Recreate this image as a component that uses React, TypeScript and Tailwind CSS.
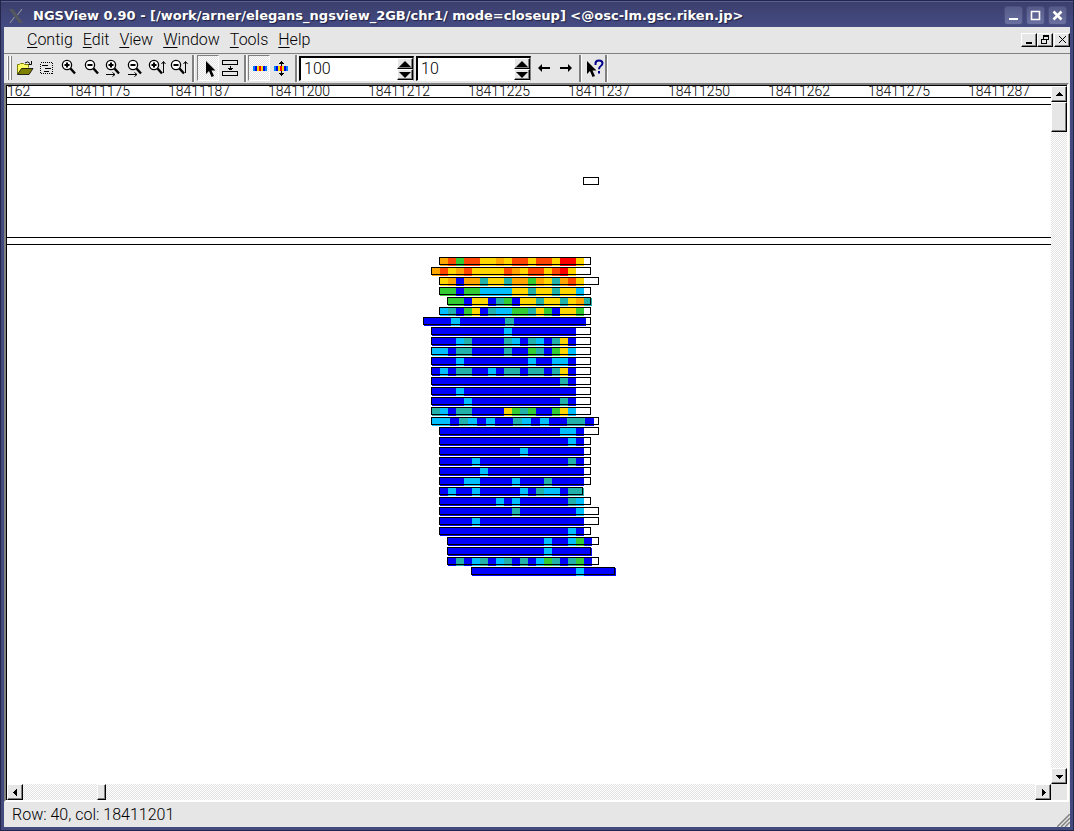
import React, { useState } from "react";

interface ReadType {
  start: number;
  end: number;
  quality: string;
  cell?: number;
}

const qualityColors: Record<string, string> = {
  R: "#ff0000",
  O: "#ff4500",
  A: "#ffa500",
  Y: "#ffd700",
  G: "#32cd32",
  T: "#20b2aa",
  S: "#00bfff",
  B: "#0000ff",
};

// one letter per base, low quality (R) to high quality (B)
const reads: ReadType[] = [
  { start: 432, end: 584, quality: "AOGOOYYAYOOYOOYRRY" },
  { start: 424, end: 584, quality: "AOYAOYYYYOAYOOYORY" },
  { start: 432, end: 592, quality: "YABAATYYTAAGAYTAOY" },
  { start: 432, end: 584, quality: "GGBGGSSSSYYTYYTYYS" },
  { start: 440, end: 584, quality: "GGBYYBTGBYYTYYTYAT" },
  { start: 432, end: 584, quality: "STBGYBTSSGGTYGBYYG" },
  { start: 416, end: 584, quality: "BBBSBBBBBTBBBBBBBB", cell: 9 },
  { start: 424, end: 584, quality: "BBBBBBBBBSBBBBBBBB" },
  { start: 424, end: 584, quality: "BBBSTBBBBTSBTSBTYB" },
  { start: 424, end: 584, quality: "SSBTTBBBBTBBGTBGYS" },
  { start: 424, end: 584, quality: "BBBSBBBBBBBBSBBSSB" },
  { start: 424, end: 584, quality: "BSBTTBBSBTTBTTBTYB" },
  { start: 424, end: 584, quality: "BBBBBBBBBBBBBBBBTB" },
  { start: 424, end: 584, quality: "BBBSBBBBBBBBBBBBBB" },
  { start: 424, end: 584, quality: "BBBBSBBBBBBBBBBBTB" },
  { start: 424, end: 584, quality: "TSBTTBBBBYGTGBBGYS" },
  { start: 424, end: 592, quality: "SSBTSBSBBTSBSBBTTB", cell: 9 },
  { start: 432, end: 592, quality: "BBBBBBBBBBBBBBBSSB" },
  { start: 432, end: 584, quality: "BBBBBBBBBBBBBBBBSB" },
  { start: 432, end: 584, quality: "BBBBBBBBBBSBBBBBBB" },
  { start: 432, end: 584, quality: "BBBBSBBBBBBBBBBBTB" },
  { start: 432, end: 584, quality: "BBBBBSBBBBBBBBBBBB" },
  { start: 432, end: 584, quality: "BBBSSBBBBSBBBTBBBB" },
  { start: 432, end: 576, quality: "BSBBSBBBBBSBTSSBTT" },
  { start: 432, end: 584, quality: "BBBBBBBSBSBBBBBBTS" },
  { start: 432, end: 592, quality: "BBBBBBBBBTBBBBBBBS" },
  { start: 432, end: 592, quality: "BBBBSBBBBBBBBBBBBB" },
  { start: 432, end: 584, quality: "BBBBBBBBBBBBBBBBSB" },
  { start: 440, end: 592, quality: "BBBBBBBBBBBBSBBSGB" },
  { start: 440, end: 584, quality: "BBBBBBBBBBBBSBBBBB" },
  { start: 440, end: 592, quality: "BTBSTBSTBTBSGTBTGB" },
  { start: 464, end: 608, quality: "BBBBBBBBBBBBBSBBBB" },
];

const positions = [
  "18411175",
  "18411187",
  "18411200",
  "18411212",
  "18411225",
  "18411237",
  "18411250",
  "18411262",
  "18411275",
  "18411287",
];

const menus = ["Contig", "Edit", "View", "Window", "Tools", "Help"];

const raised =
  "border border-t-white border-l-white border-r-black border-b-black bg-[#e6e6e6] shadow-[inset_-1px_-1px_0_#808080]";
const dither = "bg-[repeating-conic-gradient(#ffffff_0_25%,#e2e2e2_0_50%)] bg-[length:2px_2px]";

const ReadRow = ({ read, y }: { read: ReadType; y: number }) => {
  const cell = read.cell ?? 8;
  return (
    <g>
      {read.quality.split("").map((q, i) => (
        <rect key={i} x={read.start + 1 + i * cell} y={y + 1} width={cell} height={8} fill={qualityColors[q]} />
      ))}
      <rect x={read.start + 0.5} y={y + 0.5} width={read.end - read.start - 1} height={7} fill="none" stroke="#000" />
    </g>
  );
};

const Arrow = ({ dir }: { dir: "up" | "down" | "left" | "right" }) => {
  const paths = {
    up: "M4 2h1v1h1v1h1v1h1v1H1V5h1V4h1V3h1z",
    down: "M1 3h7v1H7v1H6v1H5v1H4V6H3V5H2V4H1z",
    left: "M6 1v7H5V7H4V6H3V5H2V4h1V3h1V2h1V1z",
    right: "M3 1v7h1V7h1V6h1V5h1V4H6V3H5V2H4V1z",
  };
  return (
    <svg width="9" height="9" viewBox="0 0 9 9" shapeRendering="crispEdges">
      <path d={paths[dir]} />
    </svg>
  );
};

const ToolButton = ({
  label,
  pressed,
  children,
}: {
  label: string;
  pressed?: boolean;
  children: React.ReactNode;
}) => (
  <button
    type="button"
    aria-label={label}
    className={`h-[26px] w-[22px] shrink-0 ${
      pressed ? `${dither} border border-t-[#808080] border-l-[#808080] border-r-white border-b-white` : ""
    }`}>
    <svg width="22" height="26" viewBox="0 0 22 26" className={pressed ? "-m-px block" : "block"}>
      {children}
    </svg>
  </button>
);

const Magnifier = ({ cx, plus, axis }: { cx: number; plus?: boolean; axis?: "x" | "y" }) => (
  <g>
    <circle cx={cx} cy="10" r="4.6" fill="#fff" stroke="#000" strokeWidth="1.3" />
    <path d={`M${cx + 3.5} 13.5l4.5 5`} stroke="#000" strokeWidth="2.4" />
    <rect x={cx - 2.5} y="9" width="5" height="2" />
    {plus && <rect x={cx - 1} y="7.5" width="2" height="5" />}
    {axis === "x" && (
      <path d={`M${cx - 5} 19.5h9M${cx + 1.5} 17.5l2.5 2l-2.5 2`} fill="none" stroke="#000" />
    )}
    {axis === "y" && <path d="M17.5 18V7M15.5 9l2-2.5l2 2.5" fill="none" stroke="#000" />}
  </g>
);

const Pointer = ({ x }: { x: number }) => (
  <path d={`M${x} 6v13l3-3l2.5 6l2.5-1l-2.5-5.5h4z`} fill="#000" />
);

const stripColors = ["#0080ff", "#0000e0", "#ffd700", "#ff0000", "#ffd700", "#0000e0", "#0080ff"];

const HeatStrip = ({ x }: { x: number }) => (
  <g shapeRendering="crispEdges">
    {stripColors.map((color, i) => (
      <rect key={i} x={x + i * 2} y="11" width="2" height="5" fill={color} />
    ))}
  </g>
);

const Separator = () => <div className="h-[27px] w-[3px] shrink-0 border-l-2 border-[#808080] bg-white" />;

const SpinBox = ({ label, initial }: { label: string; initial: string }) => {
  const [value, setValue] = useState(initial);
  const step = (n: number) => setValue(String(Number(value) + n));

  return (
    <div className="mt-px flex h-[25px] w-[115px] shrink-0 border-t-2 border-r border-b border-l-2 border-t-black border-l-black border-r-[#808080] border-b-white bg-white">
      <input
        aria-label={label}
        value={value}
        onChange={(e) => setValue(e.target.value)}
        className="min-w-0 flex-1 bg-white pl-[3px] outline-none"
      />
      <div className="flex w-4 flex-col">
        {[1, -1].map((n) => (
          <button
            key={n}
            type="button"
            aria-label={`${label} ${n > 0 ? "up" : "down"}`}
            onClick={() => step(n)}
            className={`flex flex-1 items-center justify-center ${raised}`}>
            <svg width="12" height="6" viewBox="0 0 12 6">
              <path d={n > 0 ? "M6 0L12 6H0z" : "M0 0h12L6 6z"} />
            </svg>
          </button>
        ))}
      </div>
    </div>
  );
};

const TitleButton = ({ label, children }: { label: string; children: React.ReactNode }) => (
  <button
    type="button"
    aria-label={label}
    className="h-[19px] w-[19px] rounded-[3px] border border-[#4a4f80] bg-linear-to-b from-[#565b89] to-[#6a71a0]">
    <svg width="17" height="17" viewBox="0 0 17 17" fill="none" stroke="#fff" strokeWidth="2">
      {children}
    </svg>
  </button>
);

const MdiButton = ({ label, children }: { label: string; children: React.ReactNode }) => (
  <button type="button" aria-label={label} className={`h-[14px] w-4 ${raised}`}>
    <svg width="14" height="12" viewBox="0 0 14 12" fill="none" stroke="#000" shapeRendering="crispEdges">
      {children}
    </svg>
  </button>
);

const TitleBar = () => (
  <header className="flex h-[26px] shrink-0 items-center border-t border-[#5a6094] bg-linear-to-b from-[#3b3f6c] to-[#454c84] pt-[3px] pr-[6px] pb-px pl-[7px]">
    <svg width="16" height="16" viewBox="0 0 16 16" aria-hidden="true">
      <path d="M1 1h4l10 14h-4z" fill="#55585f" />
      <path d="M14 1L9.5 7M6.5 9L2 15" stroke="#8a8d94" strokeWidth="1.2" />
    </svg>
    <h1 className="ml-[9px] flex-1 whitespace-nowrap font-['DejaVu_Sans'] text-[13px] leading-4 font-bold text-white [text-shadow:1px_1px_1px_#1d2040]">
      NGSView 0.90 - [/work/arner/elegans_ngsview_2GB/chr1/ mode=closeup] &lt;@osc-lm.gsc.riken.jp&gt;
    </h1>
    <div className="flex gap-[3px]">
      <TitleButton label="Minimize">
        <path d="M4 12h9" />
      </TitleButton>
      <TitleButton label="Maximize">
        <path d="M4.5 4.5h8v8h-8z" strokeWidth="1.6" />
      </TitleButton>
      <TitleButton label="Close">
        <path d="M4.5 4.5l8 8M12.5 4.5l-8 8" strokeWidth="2.6" />
      </TitleButton>
    </div>
  </header>
);

const MenuBar = () => (
  <nav className="flex h-[27px] shrink-0 items-center justify-between border-b border-[#808080] pl-[23px]">
    <div className="flex gap-[10px]">
      {menus.map((menu) => (
        <button key={menu} type="button" className="leading-5">
          <span className="underline underline-offset-2">{menu[0]}</span>
          {menu.slice(1)}
        </button>
      ))}
    </div>
    <div className="flex">
      <MdiButton label="Minimize contig window">
        <path d="M4 9h6" strokeWidth="2" />
      </MdiButton>
      <MdiButton label="Restore contig window">
        <path d="M5.5 1.5h5v4h-5zM5 2h6M3.5 5.5h5v4h-5zM3 5h6" fill="#e6e6e6" />
      </MdiButton>
      <div className="ml-px flex">
        <MdiButton label="Close contig window">
          <path d="M4 2l7 7M11 2l-7 7" />
        </MdiButton>
      </div>
    </div>
  </nav>
);

const ToolBar = () => (
  <div role="toolbar" className="flex h-[29px] shrink-0 items-start pt-px">
    <div className="mt-px mr-[2px] ml-[3px] flex shrink-0 gap-px">
      <div className="h-6 w-[2px] border-r border-l border-l-white border-r-[#808080]" />
      <div className="h-6 w-[2px] border-r border-l border-l-white border-r-[#808080]" />
    </div>
    <ToolButton label="Open">
      <path d="M3.5 19V9.5h2l1-1h3l1 1h4v3" fill="#ffff66" stroke="#808000" />
      <path d="M3.5 19.5l4-6h11.5l-4 6z" fill="#808000" stroke="#000" strokeWidth="0.8" />
      <path d="M11 8q3-2.5 5 .5M17.5 6v3.5h-3" fill="none" stroke="#000" />
    </ToolButton>
    <ToolButton label="Select region">
      <g shapeRendering="crispEdges" stroke="#000" fill="none">
        <rect x="4.5" y="7.5" width="12" height="11" strokeDasharray="1 1" />
        <path d="M6 10.5h6M9 13.5h6M8 16.5h5" />
      </g>
    </ToolButton>
    <ToolButton label="Zoom in">
      <Magnifier cx={9} plus />
    </ToolButton>
    <ToolButton label="Zoom out">
      <Magnifier cx={10} />
    </ToolButton>
    <ToolButton label="Zoom in horizontally">
      <Magnifier cx={9} plus axis="x" />
    </ToolButton>
    <ToolButton label="Zoom out horizontally">
      <Magnifier cx={9} axis="x" />
    </ToolButton>
    <ToolButton label="Zoom in vertically">
      <Magnifier cx={8} plus axis="y" />
    </ToolButton>
    <ToolButton label="Zoom out vertically">
      <Magnifier cx={8} axis="y" />
    </ToolButton>
    <div className="mx-[2px]">
      <Separator />
    </div>
    <ToolButton label="Pointer" pressed>
      <Pointer x={9} />
    </ToolButton>
    <ToolButton label="Compress rows">
      <g shapeRendering="crispEdges" fill="none" stroke="#000">
        <path d="M3.5 5.5h15v4h-15zM3.5 16.5h15v4h-15z" />
        <path d="M11.5 11v4M9 13.5h5M10 14.5h3" />
      </g>
    </ToolButton>
    <div className="mr-px ml-[3px]">
      <Separator />
    </div>
    <ToolButton label="Color by quality" pressed>
      <HeatStrip x={5} />
    </ToolButton>
    <ToolButton label="Scale color rows">
      <HeatStrip x={4} />
      <path
        d="M11 6h1v1h1v1h1v1h-2v2h-1V9H9V8h1V7h1zM11 16h1v2h2v1h-1v1h-1v1h-1v-1h-1v-1H9v-1h2z"
        shapeRendering="crispEdges"
      />
    </ToolButton>
    <div className="mr-px ml-[3px]">
      <Separator />
    </div>
    <SpinBox label="Columns" initial="100" />
    <div className="w-[2px] shrink-0" />
    <SpinBox label="Rows" initial="10" />
    <div className="w-[3px] shrink-0" />
    <ToolButton label="Previous">
      <path d="M4 13l4-4v3h8v2H8v3z" />
    </ToolButton>
    <ToolButton label="Next">
      <path d="M16 13l-4-4v3H4v2h8v3z" />
    </ToolButton>
    <div className="mx-px">
      <Separator />
    </div>
    <ToolButton label="What's this?">
      <Pointer x={4} />
      <path
        d="M12.5 10V8.5q0-3 3.5-3t3.5 2.8q0 1.700-1.700 2.700t-1.800 3.200M16 16v2.500"
        fill="none"
        stroke="#00008b"
        strokeWidth="2"
      />
    </ToolButton>
    <Separator />
  </div>
);

const Viewer = () => (
  <div className="flex min-w-0 flex-1 flex-col bg-white">
    {/* position ruler */}
    <div className="flex h-3 shrink-0 items-center border-b border-black pb-px text-sm leading-4">
      <span className="w-[61px] shrink-0">162</span>
      {positions.map((pos) => (
        <span key={pos} className="w-[100px] shrink-0">
          {pos}
        </span>
      ))}
    </div>
    <div className="h-[7px] shrink-0 border-b border-black" />
    {/* contig overview */}
    <svg className="h-[132px] w-full shrink-0" shapeRendering="crispEdges">
      <rect x="576.5" y="72.5" width="15" height="7" fill="#fff" stroke="#000" />
    </svg>
    <div className="h-2 shrink-0 border-t border-b border-black" />
    {/* aligned reads */}
    <svg className="min-h-0 w-full flex-1" shapeRendering="crispEdges">
      {reads.map((read, i) => (
        <ReadRow key={i} read={read} y={12 + i * 10} />
      ))}
    </svg>
  </div>
);

const scrollButton = `flex shrink-0 items-center justify-center ${raised}`;

const App = () => {
  return (
    <div className="flex h-screen flex-col overflow-hidden border border-[#23264a] bg-[#434a7e] font-['Roboto','Liberation_Sans',sans-serif] text-base font-light text-black">
      <TitleBar />
      <main className="mx-[3px] mb-[3px] flex min-h-0 flex-1 flex-col bg-[#e6e6e6]">
        <MenuBar />
        <ToolBar />
        <div className="mr-px flex min-h-0 flex-1 flex-col border-2 border-t-[#808080] border-r-white border-b-white border-l-[#808080]">
          <div className="flex min-h-0 flex-1 flex-col border-t border-l border-black">
            <div className="flex min-h-0 flex-1">
              <Viewer />
              {/* vertical scroll bar */}
              <div className={`flex w-4 shrink-0 flex-col ${dither}`}>
                <button type="button" aria-label="Scroll up" className={`h-4 ${scrollButton}`}>
                  <Arrow dir="up" />
                </button>
                <div className={`h-[30px] shrink-0 ${raised}`} />
                <div className="flex-1" />
                <button type="button" aria-label="Scroll down" className={`h-4 ${scrollButton}`}>
                  <Arrow dir="down" />
                </button>
              </div>
            </div>
            {/* horizontal scroll bar */}
            <div className="flex h-4 shrink-0">
              <div className={`flex min-w-0 flex-1 ${dither}`}>
                <button type="button" aria-label="Scroll left" className={`w-4 ${scrollButton}`}>
                  <Arrow dir="left" />
                </button>
                <div className="w-[74px] shrink-0" />
                <div className={`w-[9px] shrink-0 ${raised}`} />
                <div className="flex-1" />
                <button type="button" aria-label="Scroll right" className={`w-4 ${scrollButton}`}>
                  <Arrow dir="right" />
                </button>
              </div>
              <div className="w-4 shrink-0" />
            </div>
          </div>
        </div>
        <footer className="flex h-[25px] shrink-0 items-center justify-between pl-2">
          <p>Row: 40, col: 18411201</p>
          <svg width="13" height="13" viewBox="0 0 13 13" className="self-end" stroke="#808080" strokeWidth="1.5">
            <path d="M0 13L13 0M4 13l9-9M8 13l5-5" />
          </svg>
        </footer>
      </main>
    </div>
  );
};

export default App;
